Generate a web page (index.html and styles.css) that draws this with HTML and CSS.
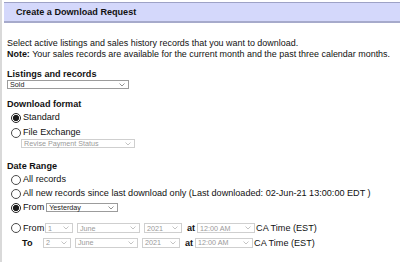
FILE: index.html
```html
<!DOCTYPE html>
<html lang="en">
<head>
  <meta charset="UTF-8" />
  <title>Create a Download Request</title>
  <link rel="stylesheet" href="styles.css">
</head>
<body>
  <div class="page">

    <div class="title-bar">Create a Download Request</div>

    <div class="content">
      <p class="intro">
        Select active listings and sales history records that you want to download.<br>
        <b>Note:</b> Your sales records are available for the current month and the past three calendar months.
      </p>

      <!-- Listings -->
      <h3>Listings and records</h3>
      <div class="sel sel-listing">
        <span>Sold</span>
        <svg width="6" height="4" viewBox="0 0 6 4"><path d="M0.5 0.5 L3 3 L5.5 0.5" /></svg>
      </div>

      <!-- Format -->
      <h3 class="gap">Download format</h3>
      <label class="opt"><input type="radio" name="fmt" checked> Standard</label>
      <label class="opt wide"><input type="radio" name="fmt"> File Exchange</label>
      <div class="sel sel-revise disabled">
        <span>Revise Payment Status</span>
        <svg width="6" height="4" viewBox="0 0 6 4"><path d="M0.5 0.5 L3 3 L5.5 0.5" /></svg>
      </div>

      <!-- Dates -->
      <h3 class="gap range">Date Range</h3>
      <label class="opt"><input type="radio" name="range"> All records</label>
      <label class="opt"><input type="radio" name="range"> All new records since last download only (Last downloaded: 02-Jun-21 13:00:00 EDT )</label>
      <div class="opt">
        <input type="radio" name="range" checked> From
        <div class="sel sel-yesterday">
          <span>Yesterday</span>
          <svg width="6" height="4" viewBox="0 0 6 4"><path d="M0.5 0.5 L3 3 L5.5 0.5" /></svg>
        </div>
      </div>

      <div class="date-rows">
        <div class="date-row">
          <label class="date-label"><input type="radio" name="range"> From</label>
          <div class="sel disabled w-day"><span>1</span><svg width="6" height="4" viewBox="0 0 6 4"><path d="M0.5 0.5 L3 3 L5.5 0.5" /></svg></div>
          <div class="sel disabled w-month"><span>June</span><svg width="6" height="4" viewBox="0 0 6 4"><path d="M0.5 0.5 L3 3 L5.5 0.5" /></svg></div>
          <div class="sel disabled w-year"><span>2021</span><svg width="6" height="4" viewBox="0 0 6 4"><path d="M0.5 0.5 L3 3 L5.5 0.5" /></svg></div>
          <b class="at">at</b>
          <div class="sel disabled w-time"><span>12:00 AM</span><svg width="6" height="4" viewBox="0 0 6 4"><path d="M0.5 0.5 L3 3 L5.5 0.5" /></svg></div>
          <span class="tz">CA Time (EST)</span>
        </div>
        <div class="date-row">
          <span class="date-label to">To</span>
          <div class="sel disabled w-day"><span>2</span><svg width="6" height="4" viewBox="0 0 6 4"><path d="M0.5 0.5 L3 3 L5.5 0.5" /></svg></div>
          <div class="sel disabled w-month"><span>June</span><svg width="6" height="4" viewBox="0 0 6 4"><path d="M0.5 0.5 L3 3 L5.5 0.5" /></svg></div>
          <div class="sel disabled w-year"><span>2021</span><svg width="6" height="4" viewBox="0 0 6 4"><path d="M0.5 0.5 L3 3 L5.5 0.5" /></svg></div>
          <b class="at">at</b>
          <div class="sel disabled w-time"><span>12:00 AM</span><svg width="6" height="4" viewBox="0 0 6 4"><path d="M0.5 0.5 L3 3 L5.5 0.5" /></svg></div>
          <span class="tz">CA Time (EST)</span>
        </div>
      </div>
    </div>

  </div>
</body>
</html>
```

FILE: styles.css
```css
body {
  margin: 0;
  font-family: 'Liberation Sans', Arial, sans-serif;
  font-size: 9.1px;
  color: #111;
  background: #fff;
  overflow: hidden;
}

.page {
  min-height: 100vh;
  border-left: 2px solid #d9d9d9;
  padding-top: 2px;
}

.title-bar {
  margin-left: 2px;
  height: 18px;
  line-height: 18px;
  padding-left: 12px;
  background: #d4d8fb;
  border-top: 1px solid #9ea2c6;
  border-bottom: 2px solid #a6aacb;
  font-weight: bold;
  color: #111;
}

.content {
  padding-left: 5px;
}

.intro {
  margin: 15px 0 0;
  line-height: 11px;
  font-size: 8.95px;
}

h3 {
  margin: 9px 0 0;
  font-size: 9.1px;
  line-height: 11px;
}

h3.gap {
  margin-top: 10px;
}

h3.range {
  margin-top: 13px;
}

/* Radio rows */
.opt {
  display: flex;
  align-items: center;
  height: 13px;
  line-height: 13px;
  white-space: nowrap;
}

.opt + .opt {
  margin-top: 1px;
}

.opt + .opt.wide {
  margin-top: 2px;
}

h3 + .opt {
  margin-top: 1px;
}

input[type="radio"] {
  appearance: none;
  -webkit-appearance: none;
  width: 10px;
  height: 10px;
  margin: 0 2px 0 4px;
  border: 1px solid #4a4a4a;
  border-radius: 50%;
  background: #fff;
  box-sizing: border-box;
  flex: none;
}

input[type="radio"]:checked {
  border-color: #222;
  background: radial-gradient(circle, #1b1b1b 0 2.8px, #fff 3.4px);
}

/* Fake select boxes */
.sel {
  display: flex;
  align-items: center;
  justify-content: space-between;
  box-sizing: border-box;
  height: 9px;
  padding: 0 3px 0 2px;
  border: 1px solid #9c9c9c;
  background: #fff;
  font-size: 7.2px;
  line-height: 7px;
  color: #222;
  flex: none;
}

.sel svg {
  fill: none;
  stroke: #777;
  stroke-width: 0.8;
}

.sel.disabled {
  border-color: #cfcfcf;
  color: #9a9a9a;
}

.sel.disabled svg {
  stroke: #b5b5b5;
}

.sel-listing {
  width: 122px;
  margin-top: 0;
}

.sel-revise {
  width: 114px;
  margin: 0 0 0 14px;
}

.sel-yesterday {
  width: 72px;
  margin-left: 2px;
}

/* Custom date range */
.date-rows {
  margin-top: 7px;
}

.date-row {
  display: flex;
  align-items: center;
  height: 14.5px;
  white-space: nowrap;
}

.date-row .sel {
  height: 10px;
}

.date-label {
  display: flex;
  align-items: center;
  width: 38px;
  flex: none;
}

.date-label.to {
  width: 21px;
  padding-left: 15px;
  font-weight: bold;
}

.w-day { width: 28px; }
.w-month { width: 63px; margin-left: 4px; }
.w-year { width: 38px; margin-left: 4px; }
.w-time { width: 58px; margin-left: 2px; }

.at {
  margin-left: 5px;
}

.tz {
  margin-left: 1px;
}
```
